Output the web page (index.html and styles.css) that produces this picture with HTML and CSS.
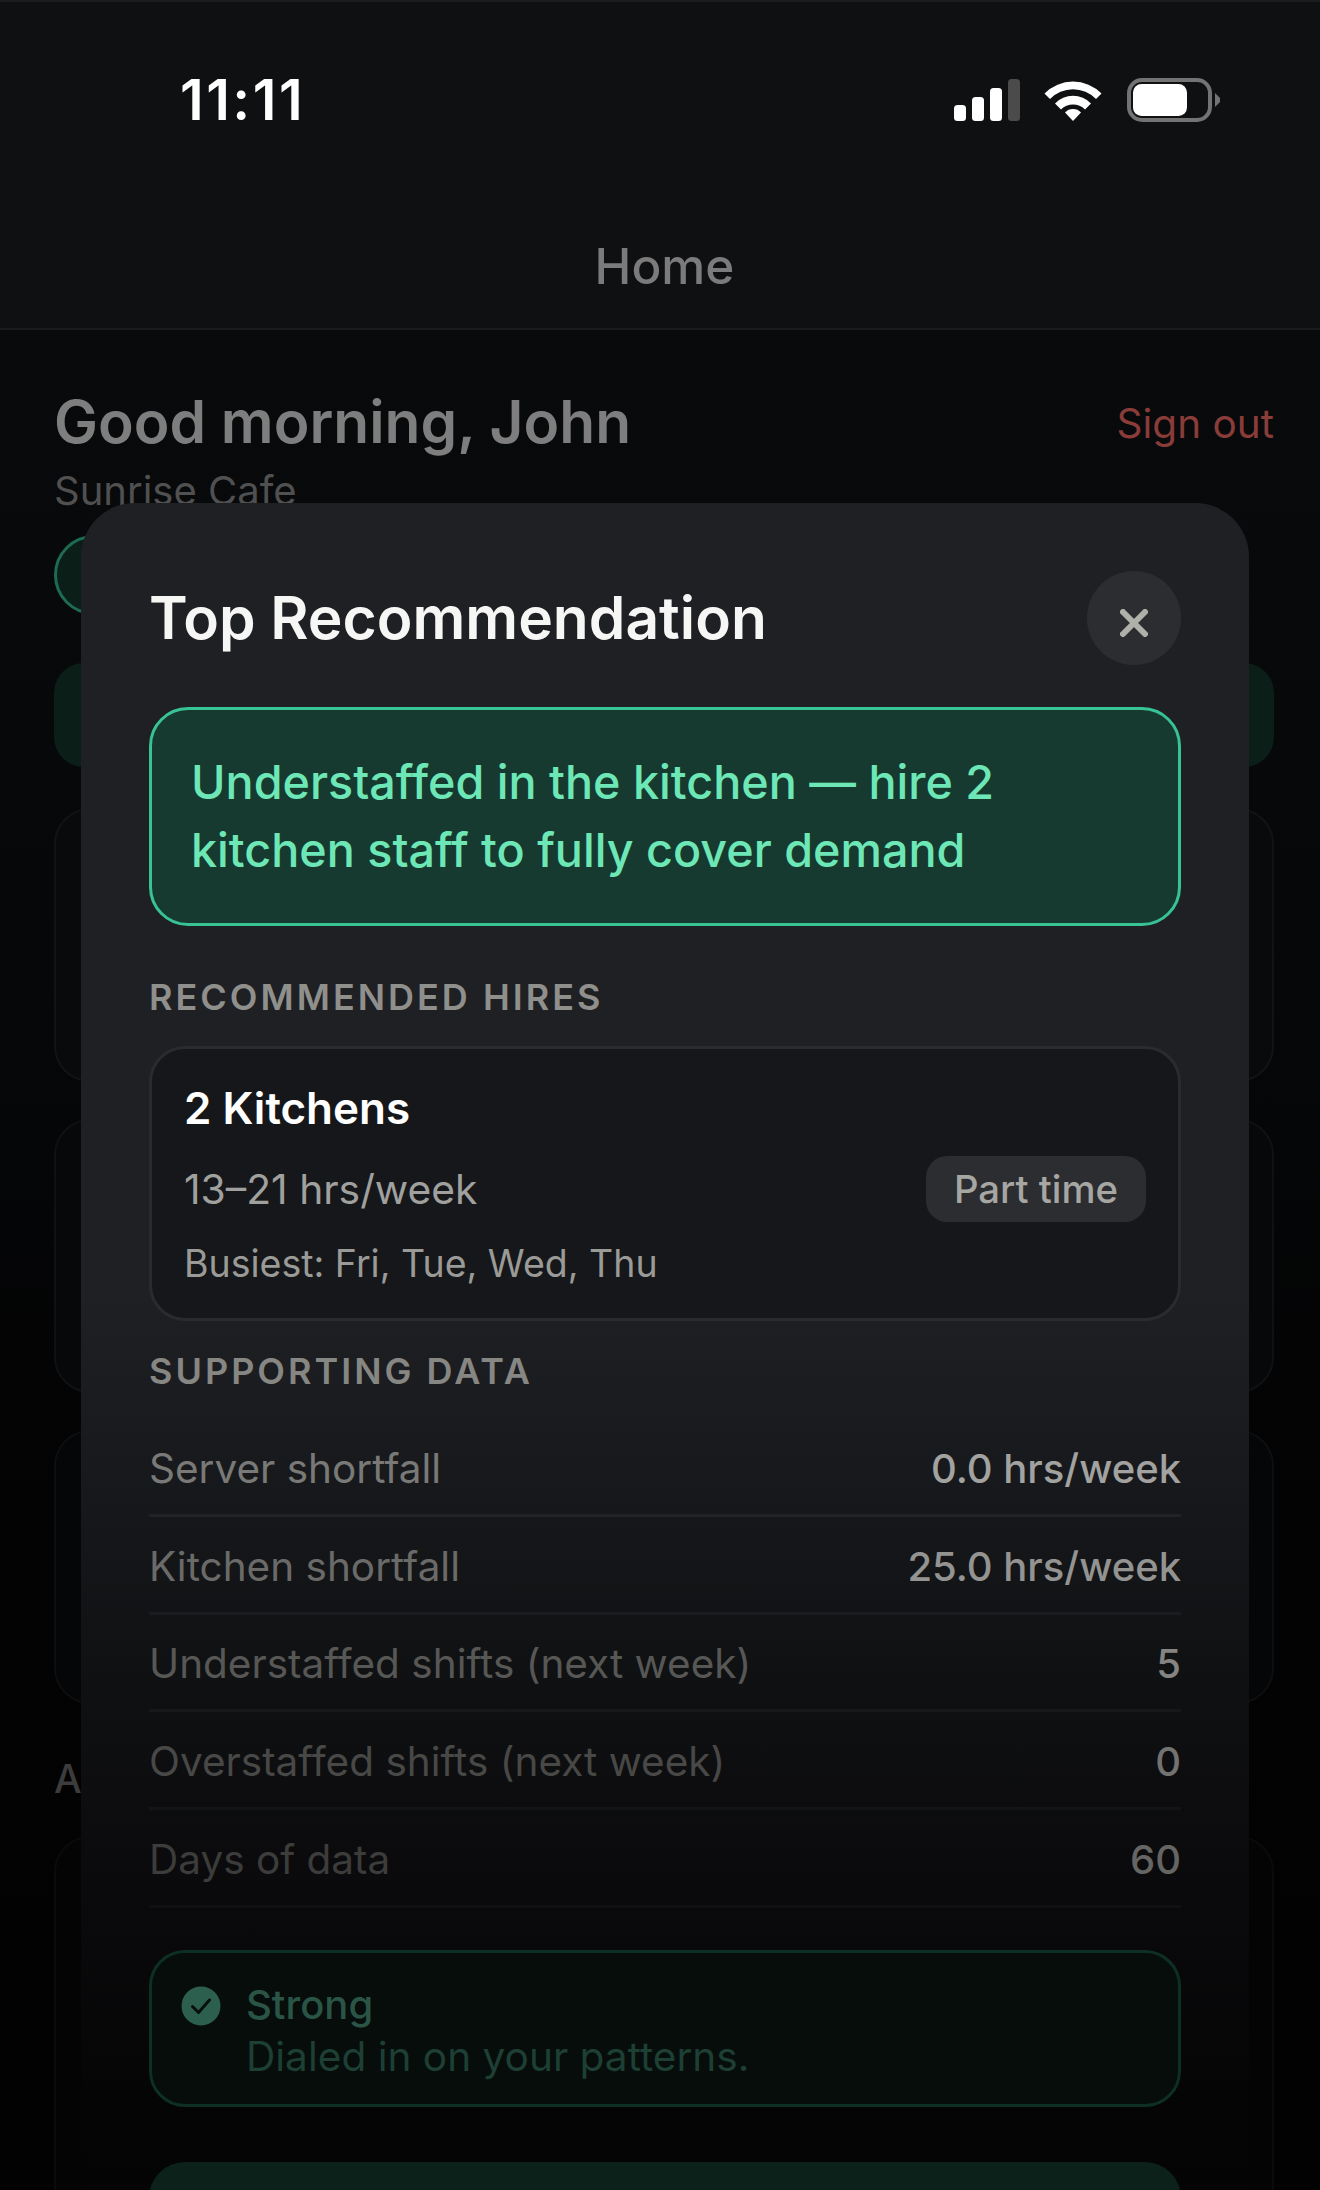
FILE: index.html
```html
<!DOCTYPE html>
<html lang="en">
<head>
<meta charset="utf-8">
<title>Home</title>
<link rel="stylesheet" href="styles.css">
</head>
<body>
<div class="screen">
  <header class="topbar">
    <div class="status">
      <span class="clock">11:11</span>
      <div class="status-icons">
        <svg class="ic-signal" width="66" height="42" viewBox="0 0 66 42">
          <rect x="0" y="26" width="12" height="16" rx="3.5" fill="#fff"/>
          <rect x="18" y="18" width="12" height="24" rx="3.5" fill="#fff"/>
          <rect x="36" y="9" width="12" height="33" rx="3.5" fill="#fff"/>
          <rect x="54" y="0" width="12" height="42" rx="3.5" fill="#4b4b4b"/>
        </svg>
        <svg class="ic-wifi" width="58" height="42" viewBox="0 0 58 42">
          <path d="M0.500 14.500 A40 40 0 0 1 57.500 14.500 L52 20 A32 32 0 0 0 6 20 Z" fill="#fff"/>
          <path d="M11 24.500 A25 25 0 0 1 47 24.500 L41 30.500 A17 17 0 0 0 17 30.500 Z" fill="#fff"/>
          <path d="M21 33.500 A11 11 0 0 1 37 33.500 L29 42 Z" fill="#fff"/>
        </svg>
        <svg class="ic-battery" width="93" height="44" viewBox="0 0 93 44">
          <rect x="2" y="2" width="81" height="40" rx="13" fill="none" stroke="#737373" stroke-width="4"/>
          <rect x="6" y="6" width="54" height="32" rx="8.500" fill="#fff"/>
          <path d="M88 15 L93 20 Q93.500 22 93 24 L88 29 Z" fill="#737373"/>
        </svg>
      </div>
    </div>
    <div class="nav-title">Home</div>
  </header>

  <main class="home">
    <div class="greet">
      <div>
        <h1 class="greet-name">Good morning, John</h1>
        <p class="greet-place">Sunrise Cafe</p>
      </div>
      <span class="signout">Sign out</span>
    </div>
    <div class="bg-pill"></div>
    <div class="bg-banner"></div>
    <div class="bg-card"></div>
    <div class="bg-card bg-card-2"></div>
    <div class="bg-card bg-card-3"></div>
    <div class="bg-label">A</div>
    <div class="bg-card bg-card-tall"></div>
  </main>

  <section class="modal">
    <div class="modal-head">
      <h2 class="modal-title">Top Recommendation</h2>
      <div class="close">
        <svg width="28" height="28" viewBox="0 0 28 28">
          <path d="M3 3 L25 25 M25 3 L3 25" stroke="#b0b0aa" stroke-width="6" stroke-linecap="round"/>
        </svg>
      </div>
    </div>

    <div class="headline">Understaffed in the kitchen — hire 2<br>kitchen staff to fully cover demand</div>

    <h3 class="section-label">RECOMMENDED HIRES</h3>
    <div class="hire">
      <div class="hire-title">2 Kitchens</div>
      <div class="hire-row">
        <span class="hire-hours">13–21 hrs/week</span>
        <span class="hire-tag">Part time</span>
      </div>
      <div class="hire-days">Busiest: Fri, Tue, Wed, Thu</div>
    </div>

    <h3 class="section-label section-label-data">SUPPORTING DATA</h3>
    <div class="rows">
      <div class="row row-1"><span>Server shortfall</span><b>0.0 hrs/week</b></div>
      <div class="row row-2"><span>Kitchen shortfall</span><b>25.0 hrs/week</b></div>
      <div class="row row-3"><span>Understaffed shifts (next week)</span><b>5</b></div>
      <div class="row row-4"><span>Overstaffed shifts (next week)</span><b>0</b></div>
      <div class="row row-5"><span>Days of data</span><b>60</b></div>
    </div>

    <div class="strength">
      <svg class="strength-icon" width="40" height="40" viewBox="0 0 40 40">
        <circle cx="20" cy="20" r="19.500" fill="#2d5f4e"/>
        <path d="M11.500 20.500 L17.500 26.500 L28.500 14" fill="none" stroke="#07100d" stroke-width="3" stroke-linecap="round" stroke-linejoin="round"/>
      </svg>
      <div>
        <div class="strength-title">Strong</div>
        <div class="strength-text">Dialed in on your patterns.</div>
      </div>
    </div>

    <div class="cta"></div>
  </section>
</div>
</body>
</html>
```
FILE: styles.css
```css
* { box-sizing: border-box; }
html, body { margin: 0; padding: 0; background: #000; }
h1, h2, h3, p { margin: 0; font-weight: inherit; font-size: inherit; }

.screen {
  position: relative;
  width: 1320px;
  height: 2190px;
  overflow: hidden;
  font-family: Inter, "Liberation Sans", sans-serif;
  background: linear-gradient(180deg, #090a0c 330px, #060708 1000px, #030304 1500px, #020203 2190px);
}

/* top bar */
.topbar {
  height: 330px;
  background: #0f1012;
  border-top: 2px solid #1b1c1f;
  border-bottom: 2px solid #1a1b1d;
}
.status {
  height: 196px;
  padding: 0 100px 0 180px;
  display: flex;
  align-items: center;
  justify-content: space-between;
}
.clock {
  color: #fff;
  font-size: 56px;
  font-weight: 600;
  letter-spacing: 2.500px;
}
.status-icons { display: flex; align-items: center; gap: 24px; }
.ic-battery { margin-left: 1px; }
.nav-title {
  padding-left: 9px;
  text-align: center;
  color: #7b7b7b;
  font-size: 49.500px;
  font-weight: 500;
  line-height: 60px;
  margin-top: 38px;
}

/* dimmed page behind the modal */
.home { padding: 58px 46px 0 54px; }
.greet { display: flex; justify-content: space-between; align-items: flex-start; }
.greet-name { color: #7e7e7e; font-size: 58.700px; font-weight: 600; line-height: 68px; }
.greet-place { color: #505050; font-size: 40px; line-height: 50px; margin-top: 10px; }
.signout { color: #8a3c39; font-size: 40.500px; line-height: 50px; margin-top: 11px; }
.bg-pill {
  width: 300px;
  height: 80px;
  margin-top: 19px;
  border: 3px solid #1d6b52;
  border-radius: 40px;
  background: #0c1e18;
}
.bg-banner {
  height: 104px;
  margin-top: 48px;
  border-radius: 30px;
  background: #0c1e18;
}
.bg-card {
  height: 274px;
  margin-top: 41px;
  border: 2px solid #121317;
  border-radius: 36px;
  background: #090a0c;
}
.bg-card + .bg-card { margin-top: 37px; }
.bg-card-2 { border-color: #101114; background: #070809; }
.bg-card-3 { border-color: #0d0e10; background: #050607; }
.bg-label {
  color: #3c3c3c;
  font-size: 39px;
  font-weight: 500;
  line-height: 44px;
  margin-top: 53px;
}
.bg-label + .bg-card { margin-top: 35px; height: 500px; background: #040405; border-color: #0a0b0c; }

/* modal */
.modal {
  position: absolute;
  left: 81px;
  top: 503px;
  width: 1168px;
  height: 1800px;
  padding: 68px 68px 0;
  border-radius: 54px 54px 0 0;
  background: linear-gradient(180deg, #1f2024 0, #1f2024 790px, #18191c 967px, #101113 1162px, #0b0b0d 1357px, #050506 1597px, #040405 1800px);
}
.modal-head { display: flex; align-items: center; justify-content: space-between; height: 94px; }
.modal-title { color: #f6f6f4; font-size: 58.700px; font-weight: 600; line-height: 72px; }
.close {
  width: 94px;
  height: 94px;
  padding-top: 10px;
  border-radius: 50%;
  background: #2c2d31;
  display: flex;
  align-items: center;
  justify-content: center;
}
.headline {
  margin-top: 42px;
  height: 219px;
  padding: 38px 39px;
  border: 3px solid #37c394;
  border-radius: 39px;
  background: #163a2f;
  color: #6ee7b7;
  font-size: 46.700px;
  font-weight: 500;
  line-height: 68px;
}
.section-label {
  margin-top: 49px;
  color: #8f8f8c;
  font-size: 36px;
  font-weight: 600;
  letter-spacing: 3px;
  line-height: 44px;
}
.hire {
  margin-top: 27px;
  height: 275px;
  padding: 32px 32px;
  border: 3px solid #2a2b2f;
  border-radius: 36px;
  background: #16171a;
}
.hire-title { color: #fff; font-size: 44px; font-weight: 600; line-height: 54px; }
.hire-row { display: flex; align-items: center; justify-content: space-between; margin-top: 21px; height: 66px; }
.hire-hours { color: #a0a09e; font-size: 40.800px; }
.hire-tag {
  height: 66px;
  padding: 0 28px;
  border-radius: 21px;
  background: #2c2d31;
  color: #a6a6a3;
  font-size: 38.300px;
  font-weight: 500;
  line-height: 66px;
}
.hire-days { color: #9a9a97; font-size: 37.500px; line-height: 46px; margin-top: 19px; }
.section-label-data { margin-top: 28px; color: #868683; }

.rows { margin-top: 26px; }
.row {
  display: flex;
  align-items: center;
  justify-content: space-between;
  height: 97.800px;
  padding-top: 4px;
  border-bottom: 3px solid var(--rule);
  font-size: 40.500px;
}
.row span { color: var(--label); }
.row b { color: var(--value); font-size: 40px; font-weight: 500; }
.row-1 { --label: #797977; --value: #a2a2a0; --rule: #212226; }
.row-2 { --label: #6a6a68; --value: #939391; --rule: #1b1c1f; }
.row-3 { --label: #575755; --value: #848482; --rule: #17181a; }
.row-4 { --label: #484846; --value: #727270; --rule: #131416; }
.row-5 { --label: #3c3c3b; --value: #656563; --rule: #0f1012; }

.strength {
  margin-top: 42px;
  height: 157px;
  padding: 29px 30px;
  display: flex;
  align-items: flex-start;
  gap: 25px;
  border: 3px solid #0e2f24;
  border-radius: 36px;
  background: #060d0b;
}
.strength-icon { margin-top: 4px; margin-left: -1px; flex: none; }
.strength-title { color: #2a5546; font-size: 40px; font-weight: 500; line-height: 46px; }
.strength-text { color: #1d3f34; font-size: 40.600px; line-height: 50px; margin-top: 4px; }

.cta {
  margin-top: 55px;
  height: 130px;
  border-radius: 36px;
  background: #0c211a;
}
```
